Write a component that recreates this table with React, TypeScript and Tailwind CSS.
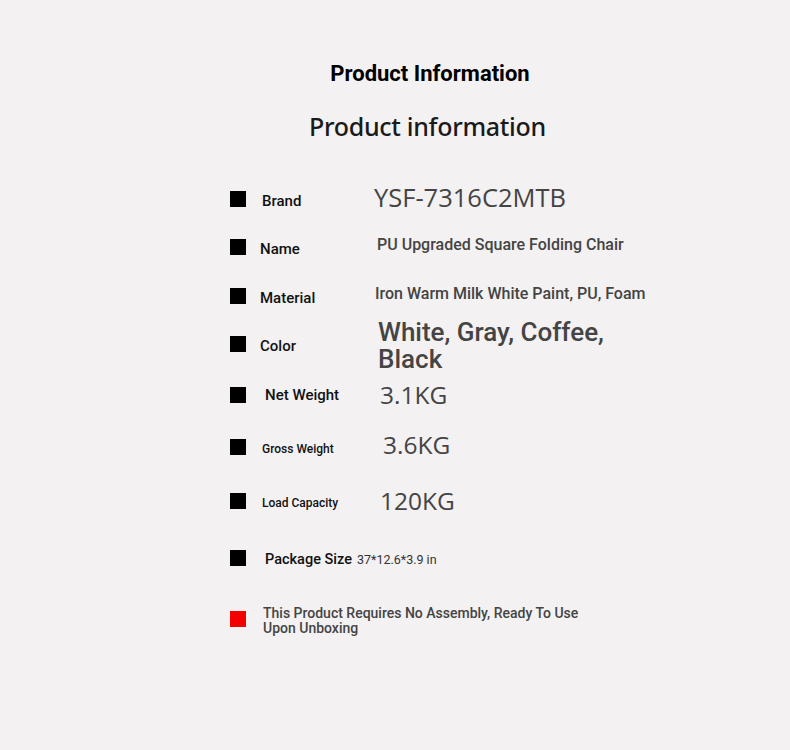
import React from 'react'

type Row = {
  label: string;
  labelCls: string;
  value: string;
  valueCls: string;
  h: string;
};

const roboto = "font-['Roboto',sans-serif]";
const open = "font-['Open_Sans',sans-serif]";

const rows: Row[] = [
  { label: "Brand", labelCls: "pl-4 text-[15px] mt-1", value: "YSF-7316C2MTB", valueCls: `${open} text-[25.5px] pl-0 -mt-1`, h: "h-[48px]" },
  { label: "Name", labelCls: "pl-[14px] text-[15px] mt-1", value: "PU Upgraded Square Folding Chair", valueCls: `${roboto} text-[16px] font-medium pl-[3px] -mt-1`, h: "h-[48px]" },
  { label: "Material", labelCls: "pl-[14px] text-[15px] mt-1", value: "Iron Warm Milk White Paint, PU, Foam", valueCls: `${roboto} text-[16px] font-medium pl-[1px] -mt-1`, h: "h-[50px]" },
  { label: "Color", labelCls: "pl-[14px] text-[15px] mt-1", value: "White, Gray, Coffee, Black", valueCls: `${roboto} text-[26px] font-medium leading-[27px] pl-[4px] w-[240px] mt-[4px]`, h: "h-[46px]" },
  { label: "Net Weight", labelCls: "pl-[19px] text-[15px]", value: "3.1KG", valueCls: `${open} text-[24.5px] pl-[6px]`, h: "h-[56px]" },
  { label: "Gross Weight", labelCls: "pl-4 text-[12px] mt-1", value: "3.6KG", valueCls: `${open} text-[24.5px] pl-[9px] -mt-1`, h: "h-[48px]" },
  { label: "Load Capacity", labelCls: "pl-4 text-[12px] mt-1", value: "120KG", valueCls: `${open} text-[24.5px] pl-[6px]`, h: "h-[60px]" },
];

const Square = ({ red }: { red?: boolean }) => (
  <div className={`w-4 h-4 shrink-0 ${red ? "bg-[#f40000]" : "bg-black"}`} />
);

export default function App() {
  return (
    <div className={`w-[790px] h-[750px] bg-[#f3f1f2] ${roboto} overflow-hidden`}>
      <div className="flex flex-col items-center pt-[60px] pl-[70px]">
        <div className="text-[22px] font-bold text-black leading-[28px]">Product Information</div>
        <div className="font-['Noto_Sans',sans-serif] text-[25px] font-medium text-[#1a1a1a] leading-[36px] mt-[20px] mr-[5px] -tracking-[0.3px]">Product information</div>
      </div>
      <div className="flex flex-col pl-[230px] pt-[31px]">
        {rows.map((r) => (
          <div key={r.label} className={`flex items-center ${r.h}`}>
            <Square />
            <div className={`w-[128px] shrink-0 font-medium text-[#111] ${r.labelCls}`}>{r.label}</div>
            <div className={`text-[#444] ${r.valueCls}`}>{r.value}</div>
          </div>
        ))}
        <div className="flex items-center h-[54px]">
          <Square />
          <div className="pl-[19px] text-[14.5px] font-medium text-[#111] mt-1">Package Size</div>
          <div className="pl-[5px] text-[12.5px] text-[#333] mt-1">37*12.6*3.9 in</div>
        </div>
        <div className="flex items-center h-[68px]">
          <Square red />
          <div className="pl-[17px] text-[14px] font-medium text-[#444] leading-[15px] mt-1">
            This Product Requires No Assembly, Ready To Use
            <br />
            Upon Unboxing
          </div>
        </div>
      </div>
    </div>
  )
}
